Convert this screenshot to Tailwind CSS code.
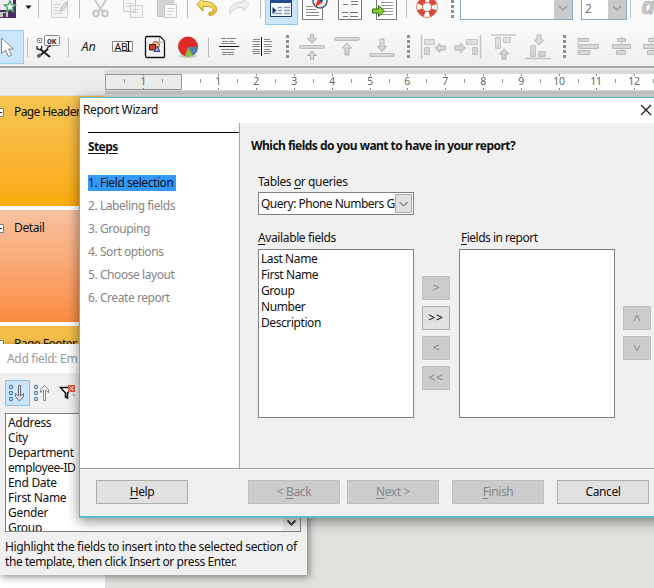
<!DOCTYPE html>
<html lang="en">
<head>
<meta charset="utf-8">
<title>Report Wizard</title>
<script src="https://cdn.jsdelivr.net/npm/@tailwindcss/browser@4"></script>
</head>
<body class="relative h-[588px] w-[654px] overflow-hidden bg-[#e0e0dd] font-['Noto_Sans',sans-serif] text-[12px] leading-[16px] tracking-[-0.38px] text-[#111]">

<svg class="absolute h-0 w-0">
  <defs>
    <linearGradient id="steel" x1="0" y1="0" x2="0" y2="1"><stop offset="0" stop-color="#e4e4e4"/><stop offset="1" stop-color="#cccccc"/></linearGradient>
    <linearGradient id="gold" x1="0" y1="0" x2="0" y2="1"><stop offset="0" stop-color="#fff08a"/><stop offset="1" stop-color="#e8b21a"/></linearGradient>
    <g id="grip" fill="#8f8f8f"><path d="M0 0h3v3H0zM0 5h3v3H0zM0 10h3v3H0zM0 15h3v3H0zM0 20h3v3H0z"/></g>
    <path id="down" d="M-1.500 0h3v4h3L0 8.500-4.500 4h3z" fill="url(#steel)" stroke="#b0b0b0"/>
  </defs>
</svg>

<div class="flex h-full flex-col">
  <!-- Standard toolbar -->
  <div class="flex h-[28px] shrink-0 bg-[#fafafa]">
    <svg class="shrink-0" width="45" height="28" viewBox="0 0 45 28"><path d="M0 0h16v18H0z" fill="#4e2963"/><path d="M0 0h13v10H0z" fill="#f3eef5"/><path d="M0 12h8v5H0z" fill="#c8c8ce"/><path d="M3 13h3v4H3z" fill="#444"/><path d="M10 1l1.500 3.500 4 .5-3 2.500 1 4-3.500-2-3.500 2 1-4-3-2.500 4-.5z" fill="#fff" stroke="#48a868" stroke-width="1.500"/><path d="M25.500 5.500h6l-3 3.500z" fill="#000"/><path d="M38.500 0v18" stroke="#bbb"/></svg>
    <svg class="shrink-0" width="40" height="28" viewBox="45 0 40 28" fill="none"><path d="M51.500 -2h16v19.500h-16z" fill="#f4f4f4" stroke="#d2d2d2"/><path d="M54 4.500h7M54 7.500h5M54 10.500h5M54 13.500h9" stroke="#d2d2d2"/><path d="M60 12l1-4 5-6 2 2-5 6z" fill="#ddd" stroke="#bbb"/><path d="M79.500 0v18" stroke="#bbb"/></svg>
    <svg class="shrink-0" width="107" height="28" viewBox="85 0 107 28" fill="none"><path d="M95 0l7 11M106 0l-7 11" stroke="#cacaca" stroke-width="2"/><circle cx="96" cy="13.500" r="2.800" stroke="#c0c0c0" stroke-width="1.800"/><circle cx="105" cy="13.500" r="2.800" stroke="#c0c0c0" stroke-width="1.800"/>
      <path d="M123.500-2h12v13.500h-12zM130.500 5.500h12v12h-12z" fill="#f7f7f7" stroke="#ccc"/><path d="M126 3.500h7M126 6.500h4M133 9.500h7M133 12.500h5" stroke="#d2d2d2"/>
      <path d="M157.500-2h16v18.500h-16z" fill="#d4d4d4" stroke="#c4c4c4"/><path d="M164.500 4.500h12v13h-12z" fill="#f9f9f9" stroke="#c8c8c8"/><path d="M167 8.500h7M167 11.500h7M167 14.500h5" stroke="#d2d2d2"/><path d="M187.500 0v18" stroke="#bbb"/></svg>
    <svg class="shrink-0" width="73" height="28" viewBox="192 0 73 28"><path d="M197 4.500l6-6.500v3.500c8-.5 13 3 13.500 7 .5 4-3 7-7.500 7v-3c3 0 4.500-1.500 4-3.500-.5-2-4-3-10-2.500v4.500z" fill="url(#gold)" stroke="#c49a24"/><path d="M249 4.500l-6-5.500v3c-8 0-13 4-13.500 9 0 1 .5 2 1 3 1-4 5-7 12.500-6.500v3.500z" fill="#efefef" stroke="#d0d0d0"/><path d="M260.500 0v18" stroke="#bbb"/></svg>
    <div class="h-[25px] w-[33px] shrink-0 border border-t-0 border-[#98c8ef] bg-[#cbe5fb]"><svg width="31" height="24" viewBox="266 0 31 24"><path d="M270.500 -1h21v17.500h-21z" fill="#f8fbff" stroke="#1c3c70"/><path d="M270-1h22v4h-22z" fill="#274d91"/><path d="M278 7.500h4M284 7.500h6M278 10.500h4M284 10.500h6M274 13.500h8M284 13.500h6" stroke="#8ba1bd" stroke-width="1.500"/><path d="M272.500 7l4 3.500-4 3.500z" fill="#173664"/></svg></div>
    <svg class="shrink-0" width="102" height="28" viewBox="298 0 102 28" fill="none"><path d="M302.500-1h20v20.500h-20z" fill="#fff" stroke="#777"/><path d="M306 6.500h7M306 9.500h10M306 12.500h13M306 15.500h13" stroke="#888"/><circle cx="320" cy="1" r="7" fill="#e4edf5" stroke="#555c66" stroke-width="1.500"/><path d="M315 7l3-8 4 4z" fill="#e03226"/><path d="M318-1l6-4-2 8z" fill="#173f78"/>
      <path d="M338.500-1h23v20.500h-23z" fill="#fcfcfc" stroke="#777"/><path d="M343 4.500h5M351 1.500h7M351 4.500h7M342 12.500h6M350 12.500h8M343 16.500h5M350 16.500h8" stroke="#777"/>
      <path d="M376.500-1h20v20.500h-20z" fill="#fff" stroke="#777"/><path d="M381 2.500h12M381 5.500h12M381 8.500h12M381 11.500h12M381 14.500h12" stroke="#999"/><path d="M372.500 9h6V5.500l6 5.500-6 5.500V13h-6z" fill="#86cf35" stroke="#2d6b12"/></svg>
    <svg class="shrink-0" width="60" height="28" viewBox="400 0 60 28"><path d="M406.500 0v18" stroke="#bbb"/><circle cx="427" cy="7" r="7.500" fill="none" stroke="#fff" stroke-width="6"/><circle cx="427" cy="7" r="7.500" fill="none" stroke="#d94a38" stroke-width="5.500" stroke-dasharray="7 4.780" stroke-dashoffset="-2.400"/><circle cx="427" cy="7" r="10.500" fill="none" stroke="#d98572"/><circle cx="427" cy="7" r="4.500" fill="#fafafa" stroke="#c96a59"/><path d="M451 0h3v3h-3zM451 5h3v3h-3zM451 10h3v3h-3zM451 15h3v3h-3z" fill="#8f8f8f"/></svg>
    <div class="flex h-[20px] w-[113px] shrink-0 justify-end border border-t-0 border-[#8da8c9] bg-white"><div class="h-[19px] w-[18px] bg-[#cbcbcb]"><svg width="18" height="18" fill="none"><path d="M5 6l4 4 4-4" stroke="#999" stroke-width="1.500"/></svg></div></div>
    <div class="ml-[8px] flex h-[20px] w-[46px] shrink-0 justify-between border border-t-0 border-[#8da8c9] bg-white"><span class="pl-[3px] text-[12px] leading-[17px] text-[#777]">2</span><div class="h-[19px] w-[18px] bg-[#cbcbcb]"><svg width="18" height="18" fill="none"><path d="M5 6l4 4 4-4" stroke="#999" stroke-width="1.500"/></svg></div></div>
    <svg class="shrink-0" width="27" height="28" viewBox="627 0 27 28"><path d="M630.500 0v18" stroke="#bbb"/><text x="641" y="14" font-size="24" font-weight="bold" font-style="italic" fill="#c6c6c6" stroke="#aaa" stroke-width=".5">a</text></svg>
  </div>

  <!-- Report controls toolbar -->
  <div class="flex h-[40px] shrink-0 items-start border-b-2 border-[#a6a6a6] bg-linear-to-b from-[#fafafa] to-[#efefef] pt-[2px]">
    <div class="h-[34px] w-[24px] shrink-0 border border-l-0 border-[#9acbf1] bg-[#cbe5fb]"><svg width="23" height="32" viewBox="0 31 23 32"><path d="M1.500 38v15.500l4-3.500 3 6.500 3-1.500-3-6h5z" fill="#fff" stroke="#888"/></svg></div>
    <svg class="shrink-0" width="48" height="34" viewBox="24 30 48 34" fill="none"><path d="M27.500 38v19M68.500 38v19" stroke="#bbb"/><path d="M37.500 38.500h4v4h-4z" stroke="#888"/><path d="M39 40h1v1h-1z" fill="#333"/><rect x="44.500" y="35.500" width="15" height="10" rx="1" fill="#f6f6f6" stroke="#888"/><text x="47" y="43.500" font-size="8" font-family="Liberation Mono" font-weight="bold" fill="#333" letter-spacing="0">OK</text><path d="M38 57l10-8M40 49l10 8" stroke="#222" stroke-width="2"/><path d="M37 46v3l4 1 1-4M47 50l1-3 3-1" stroke="#222" stroke-width="1.300"/><path d="M37.500 57l3-2.500" stroke="#666" stroke-width="3.500"/></svg>
    <svg class="shrink-0" width="68" height="34" viewBox="72 30 68 34"><text x="81.500" y="51" font-size="12.500" font-style="italic" fill="#222" letter-spacing="0">An</text><path d="M112.500 41.500h20v10h-20z" fill="#f7f7f7" stroke="#888"/><text x="114.500" y="50.500" font-size="10.500" fill="#111" letter-spacing="-.3">AB</text><path d="M126.500 41.500h4M128.500 42v9M126.500 51h4" stroke="#111" fill="none"/></svg>
    <svg class="shrink-0" width="72" height="34" viewBox="140 30 72 34"><path d="M147 36.500h13l4.500 4.500v15.500q0 1-1 1h-16.500q-1.500 0-1.500-1.500v-18q0-1.500 1.500-1.500z" fill="#f3f3f3" stroke="#111" stroke-width="1.300"/><path d="M159.500 37v5h5" fill="#fff" stroke="#999"/><circle cx="156" cy="45" r="3.500" fill="#f2c49a" stroke="#8c5a33"/><path d="M149.500 44.500h6v5.500h-6z" fill="#d23c24" stroke="#56190f"/><path d="M157 46l3 5.500h-6z" fill="#93a5dc" stroke="#3e4679"/>
      <ellipse cx="188" cy="56" rx="9" ry="2" fill="#ccc"/><circle cx="188" cy="46.500" r="10" fill="#dd2c25"/><path d="M188 47h10q0 6-5 8.500z" fill="#5580ac"/><path d="M188 47l5 8.500q-4 2-8 .5z" fill="#87bd48"/><path d="M208.500 38v19" stroke="#bbb"/></svg>
    <svg class="shrink-0" width="84" height="34" viewBox="212 30 84 34" fill="none" stroke="#888"><path d="M221 38.500h5m1 0h9M222 41.500h6m1 0h5M221 43.500h15M221 49.500h14M222 52.500h12M222 54.500h5m1 0h6"/><path d="M219 46.500h20" stroke="#111"/><path d="M253 39.500h7m4 0h6M252 41.500h8m4 0h8M253 44.500h7m4 0h7M252 46.500h8m4 0h8M253 49.500h7m4 0h6M252 51.500h8m4 0h8M253 53.500h7m4 0h6"/><path d="M261.500 37v19" stroke="#111"/><use href="#grip" x="286" y="35" stroke="none"/></svg>
    <svg class="shrink-0" width="120" height="34" viewBox="296 30 120 34"><g fill="url(#steel)" stroke="#bdbdbd"><rect x="299.500" y="45.500" width="25" height="3" rx="1.500"/><rect x="334.500" y="37.500" width="25" height="3" rx="1.500"/><rect x="369.500" y="53.500" width="25" height="3" rx="1.500"/></g><use href="#down" x="312" y="34.500"/><use href="#down" transform="translate(312 59.500) scale(1 -1)"/><path d="M347 43l4.500 5h-2.500V55h-4v-7h-2.500z" fill="url(#steel)" stroke="#b0b0b0"/><path d="M382 51.500l-4.500-5h2.500V39h4v7.500h2.500z" fill="url(#steel)" stroke="#b0b0b0"/><use href="#grip" x="407" y="35"/></svg>
    <svg class="shrink-0" width="156" height="34" viewBox="416 30 156 34" fill="url(#steel)" stroke="#c4c4c4"><path d="M421.500 35v24M480.500 35v24M491 35h25M525 58.500h26" stroke-width="1.500"/><path d="M424.500 39.500h10v5h-10zM424.500 47.500h5v7h-5zM466.500 39.500h11v5h-11zM472.500 47.500h5v7h-5zM495.500 37.500h5v11h-5zM503.500 37.500h7v5h-7zM530.500 45.500h5v11h-5zM538.500 51.500h7v5h-7z"/><path d="M435 48l5-4.500V46h5.500v4H440v2.500zM465.500 48l-5-4.500V46H455v4h5.500v2.500zM504 49l4.500 5h-2.500v5h-4v-5h-2.500zM539 45l-4.500-5h2.500v-5h4v5h2.500z" stroke="#b3b3b3"/><use href="#grip" x="563" y="35" stroke="none"/></svg>
    <svg class="shrink-0" width="82" height="34" viewBox="572 30 82 34" fill="#d8d8d8" stroke="#bababa"><path d="M578 37v18M621.500 37v18M651.500 37v18"/><path d="M579.500 38.500h9v3h-9zM579.500 44.500h19v4h-19zM579.500 50.500h10v4h-10zM617.500 38.500h8v3h-8zM612.500 44.500h18v4h-18zM616.500 50.500h9v4h-9zM648.500 38.500h9v3h-9zM643.500 44.500h15v4h-15zM647.500 50.500h9v4h-9z"/></svg>
  </div>

  <!-- Ruler -->
  <div class="flex h-[27px] shrink-0 bg-[#ececec] pt-[2px]">
    <svg id="ruler" class="shrink-0" width="654" height="25" viewBox="0 70 654 25" font-size="10.500" fill="#666"><path d="M105 70h549v25H105z" fill="#dadada"/><path d="M181 74h473v16H181z" fill="#fff"/><path d="M105.500 74.500h76v15h-76z" fill="#ebebeb" stroke="#999"/><path d="M105 91h549v3H105z" fill="#c9c9c9"/></svg>
  </div>

  <!-- Design sections -->
  <div class="flex flex-1 pt-px">
    <div class="w-[105px] shrink-0 bg-white text-[12px]">
      <div class="flex h-[110px] items-start bg-linear-to-b from-[#f7c552] to-[#faaa00] pt-[8px]"><svg width="14" height="16"><path d="M-4.500 4.500h8v8h-8z" fill="#fff" stroke="#688"/><path d="M0 8.500h2" stroke="#222"/></svg><span class="whitespace-nowrap tracking-[-0.6px]">Page Header</span></div>
      <div class="mt-[4px] flex h-[112px] items-start bg-linear-to-b from-[#f7c2a0] to-[#fb8c3f] pt-[10px]"><svg width="14" height="16"><path d="M-4.500 4.500h8v8h-8z" fill="#fff" stroke="#688"/><path d="M0 8.500h2" stroke="#222"/></svg><span>Detail</span></div>
      <div class="mt-[4px] flex h-[18px] items-start overflow-hidden bg-[#f3bd48] pt-[10px]"><svg width="14" height="16"><path d="M-4.500 4.500h8v8h-8z" fill="#fff" stroke="#688"/></svg><span class="tracking-[-0.5px]">Page Footer</span></div>
    </div>
  </div>
</div>

<!-- Add field window -->
<section class="absolute left-[-1px] top-[344px] flex h-[231px] w-[308px] flex-col bg-[#f0f0f0] shadow-[2px_2px_7px_#00000070]">
  <h2 class="h-[29px] bg-white pl-[8px] pt-[7px] text-[12px] tracking-[-0.3px] text-[#999]">Add field: Em</h2>
  <div class="flex h-[40px] items-start pl-[6px] pt-[7px]">
    <svg width="76" height="26" viewBox="5 380 76 26" fill="none"><path d="M5.500 380.500h24v25h-24z" fill="#cbe5fb" stroke="#86bee9"/><g stroke="#4e83b3" stroke-width="1.200"><circle cx="11" cy="387" r="1.600"/><circle cx="11" cy="393" r="1.600"/><circle cx="11" cy="399" r="1.600"/><circle cx="36" cy="387" r="1.600"/><circle cx="36" cy="393" r="1.600"/><circle cx="36" cy="399" r="1.600"/></g><path d="M18.500 385.500h2v10.500l3-2.500v3l-4 4.500-4-4.500v-3l3 2.500z" fill="#dfe6ec" stroke="#667"/><path d="M43.500 400.500h2V390l3 2.500v-3l-4-4-4 4v3l3-2.500z" fill="#f4f4f4" stroke="#888"/><path d="M60.500 387.500h12l-5 5.500v5l-2-1v-4z" fill="#fff" stroke="#111" stroke-width="1.500"/><path d="M68 385h7v7h-7z" fill="#e05a42"/><path d="M69.500 386.500l4 4m0-4l-4 4" stroke="#fff"/><path d="M72 393.500l2.500 1.500V396z" fill="#111"/></svg>
  </div>
  <div class="ml-[6px] flex h-[119px] w-[296px] justify-between overflow-hidden border border-[#828282] bg-white">
    <ul class="pl-[2px] pt-px text-[12px] leading-[15px] tracking-[-0.3px]"><li>Address</li><li>City</li><li>Department</li><li class="tracking-[-0.4px]">employee-ID</li><li>End Date</li><li>First Name</li><li>Gender</li><li>Group</li></ul>
    <div class="flex w-[17px] items-end bg-[#f0f0f0]"><svg width="17" height="15" fill="none"><path d="M4.500 4.500l4 4 4-4" stroke="#444" stroke-width="2"/></svg></div>
  </div>
  <p class="whitespace-nowrap pl-[6px] pt-[7px] text-[12px] leading-[15px] tracking-[-0.34px]">Highlight the fields to insert into the selected section of<br><span class="tracking-[-0.43px]">the template, then click Insert or press Enter.</span></p>
</section>

<!-- Wizard -->
<section class="absolute left-[79px] top-[97px] flex h-[421px] w-[590px] flex-col border border-b-2 border-[#60b9ca] bg-[#f0f0f0] shadow-[0_3px_12px_#00000078]">
  <header class="flex h-[25px] shrink-0 justify-between bg-white pl-[3px] pr-[16px] pt-[4px]"><h1>Report Wizard</h1><svg width="12" height="16"><path d="M1 3l10 10M11 3L1 13" stroke="#111" stroke-width="1.100"/></svg></header>
  <div class="flex h-[346px] shrink-0 border-b border-[#999]">
    <aside class="w-[160px] shrink-0 border-r border-[#a5a5a5] bg-white pl-[8px] pt-[9px]">
      <div class="border-t border-black pt-[6px] font-bold tracking-[-0.6px] underline underline-offset-2">Steps</div>
      <ol class="flex flex-col items-start gap-[7px] pt-[20px] tracking-[-0.43px] text-[#858585]">
        <li class="w-[88px] bg-[#3399fd] text-[#111]">1. Field selection</li><li>2. Labeling fields</li><li>3. Grouping</li><li>4. Sort options</li><li>5. Choose layout</li><li>6. Create report</li>
      </ol>
    </aside>
    <main class="flex-1 pl-[11px] pt-[15px]">
      <h2 class="whitespace-nowrap font-bold tracking-[-0.53px]">Which fields do you want to have in your report?</h2>
      <div class="pl-[7px] pt-[20px]">
        <label>Tables <u class="underline-offset-2">o</u>r queries</label>
        <div class="mt-[2px] flex h-[23px] w-[156px] items-center border border-[#828282] bg-white pl-[2px] pr-px"><span class="w-[134px] overflow-hidden whitespace-nowrap tracking-[-0.5px]">Query: Phone Numbers G</span><svg class="shrink-0" width="17" height="19" fill="none"><path d="M.5.5h16v18H.5z" fill="#e1e1e1" stroke="#aaa"/><path d="M4.500 8l4 4 4-4" stroke="#444"/></svg></div>
        <div class="flex pt-[15px]">
          <div><div><u class="underline-offset-2">A</u>vailable fields</div><ul class="mt-[3px] h-[169px] w-[156px] border border-[#828282] bg-white pl-[2px] pt-[1px] tracking-[-0.42px]"><li>Last Name</li><li>First Name</li><li>Group</li><li>Number</li><li>Description</li></ul></div>
          <div class="flex w-[45px] flex-col items-start gap-[6px] pl-[8px] pt-[46px] text-[#858585]">
            <button class="h-[24px] w-[28px] border border-[#bfbfbf] bg-[#ccc]">&gt;</button><button class="h-[24px] w-[28px] border border-[#adadad] bg-[#e1e1e1] tracking-[1px] text-black">&gt;&gt;</button><button class="h-[24px] w-[28px] border border-[#bfbfbf] bg-[#ccc]">&lt;</button><button class="h-[24px] w-[28px] border border-[#bfbfbf] bg-[#ccc] tracking-[1px]">&lt;&lt;</button>
          </div>
          <div><div class="pl-[2px] tracking-[-0.5px]"><u class="underline-offset-2">F</u>ields in report</div><div class="mt-[3px] h-[169px] w-[156px] border border-[#828282] bg-white"></div></div>
          <div class="ml-[8px] flex flex-col gap-[6px] pt-[76px]"><button class="flex h-[24px] w-[28px] items-center justify-center border border-[#bfbfbf] bg-[#ccc]"><svg width="8" height="8" fill="none"><path d="M1 7l3-6 3 6" stroke="#858585"/></svg></button><button class="flex h-[24px] w-[28px] items-center justify-center border border-[#bfbfbf] bg-[#ccc]"><svg width="8" height="8" fill="none"><path d="M1 1l3 6 3-6" stroke="#858585"/></svg></button></div>
        </div>
      </div>
    </main>
  </div>
  <footer class="flex border-t border-white pl-[16px] pt-[10px]">
    <button class="h-[24px] w-[92px] border border-[#adadad] bg-[#e1e1e1]"><u class="underline-offset-2">H</u>elp</button>
    <button class="ml-[60px] h-[24px] w-[92px] border border-[#bfbfbf] bg-[#ccc] text-[#858585]">&lt; <u class="underline-offset-2">B</u>ack</button>
    <button class="ml-[7px] h-[24px] w-[92px] border border-[#bfbfbf] bg-[#ccc] text-[#858585]"><u class="underline-offset-2">N</u>ext &gt;</button>
    <button class="ml-[13px] h-[24px] w-[92px] border border-[#bfbfbf] bg-[#ccc] text-[#858585]"><u class="underline-offset-2">F</u>inish</button>
    <button class="ml-[13px] h-[24px] w-[92px] border border-[#adadad] bg-[#e1e1e1]">Cancel</button>
  </footer>
</section>

<script>
  const ruler = document.getElementById('ruler');
  const origin = 180.6, pitch = 37.8;
  let marks = '';
  for (let i = -1; i <= 12; i++) {
    const x = Math.round(origin + i * pitch);
    if (i) marks += `<path d="M${x + .5} 74v2M${x + .5} 88v2" stroke="#888"/><text x="${x}" y="84.500" text-anchor="middle">${Math.abs(i)}</text>`;
    const half = Math.round(x + pitch / 2);
    marks += `<path d="M${half + .5} 79v4" stroke="#999"/>`;
  }
  marks += '<path d="M124.500 79v4" stroke="#999"/>';
  ruler.insertAdjacentHTML('beforeend', marks);
</script>
</body>
</html>
